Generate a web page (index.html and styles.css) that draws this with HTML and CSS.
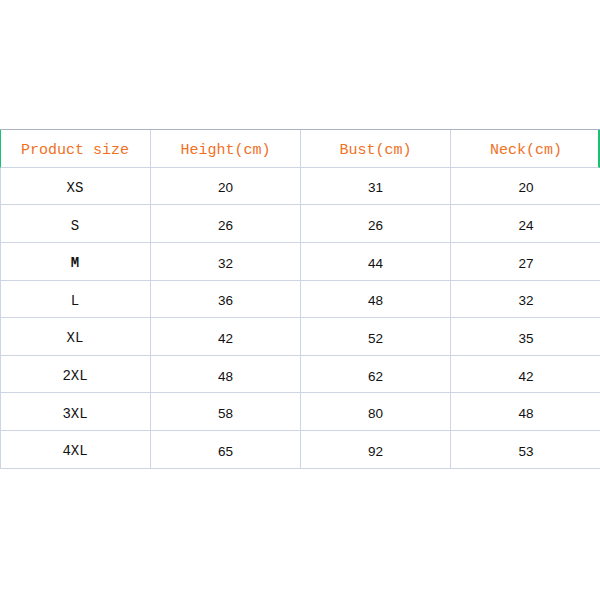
FILE: index.html
```html
<!DOCTYPE html>
<html>
<head>
<meta charset="utf-8">
<link rel="stylesheet" href="styles.css">
</head>
<body>
<div class="table">
  <div class="row head">
    <div class="cell">Product size</div>
    <div class="cell">Height(cm)</div>
    <div class="cell">Bust(cm)</div>
    <div class="cell">Neck(cm)</div>
  </div>
  <div class="row"><div class="cell sz">XS</div><div class="cell num">20</div><div class="cell num">31</div><div class="cell num">20</div></div>
  <div class="row"><div class="cell sz">S</div><div class="cell num">26</div><div class="cell num">26</div><div class="cell num">24</div></div>
  <div class="row"><div class="cell sz m">M</div><div class="cell num">32</div><div class="cell num">44</div><div class="cell num">27</div></div>
  <div class="row"><div class="cell sz">L</div><div class="cell num">36</div><div class="cell num">48</div><div class="cell num">32</div></div>
  <div class="row"><div class="cell sz">XL</div><div class="cell num">42</div><div class="cell num">52</div><div class="cell num">35</div></div>
  <div class="row"><div class="cell sz">2XL</div><div class="cell num">48</div><div class="cell num">62</div><div class="cell num">42</div></div>
  <div class="row"><div class="cell sz">3XL</div><div class="cell num">58</div><div class="cell num">80</div><div class="cell num">48</div></div>
  <div class="row"><div class="cell sz">4XL</div><div class="cell num">65</div><div class="cell num">92</div><div class="cell num">53</div></div>
</div>
</body>
</html>
```

FILE: styles.css
```css
html, body {
  margin: 0;
  padding: 0;
  background: #ffffff;
}
.table {
  margin-top: 129px;
  width: 600px;
  border-top: 1px solid #aab3c6;
  display: flex;
  flex-direction: column;
}
.row {
  display: grid;
  grid-template-columns: 150px 150px 150px 150px;
  height: 37.625px;
  box-sizing: border-box;
  border-bottom: 1px solid #cdd4e4;
  border-left: 1px solid #cdd4e4;
}
.row.head {
  border-left: 1px solid #1dbf73;
  border-right: 2px solid #1dbf73;
}
.cell {
  display: flex;
  align-items: center;
  justify-content: center;
  box-sizing: border-box;
  padding-top: 4px;
  border-right: 1px solid #cdd4e4;
  font-size: 14px;
  color: #111;
}
.row .cell:first-child {
  margin-left: -1px;
}
.row .cell:last-child {
  border-right: none;
}
.head .cell {
  font-family: "Liberation Mono", "DejaVu Sans Mono", monospace;
  font-size: 15px;
  color: #f0711f;
}
.sz {
  font-family: "Liberation Mono", "DejaVu Sans Mono", monospace;
  font-size: 14px;
  color: #111;
}
.sz.m {
  font-weight: bold;
}
.num {
  font-family: "Liberation Sans", Arial, sans-serif;
  font-size: 13.5px;
  color: #111;
}
```
